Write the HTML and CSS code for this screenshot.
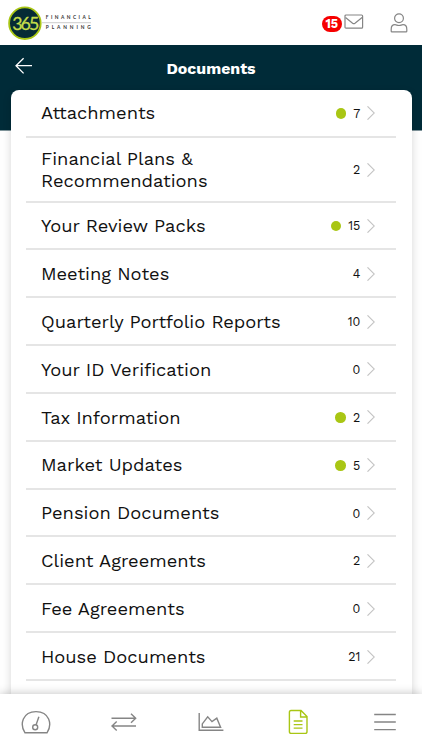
FILE: index.html
```html
<!DOCTYPE html>
<html lang="en">
<head>
 <meta charset="UTF-8">
 <meta name="viewport" content="width=device-width, initial-scale=1">
 <title>Documents</title>
 <link rel="stylesheet" href="styles.css">
</head>
<body>
<div class="app">
 <header class="topbar">
  <svg class="logo" width="86" height="36" viewBox="0 0 86 36">
   <circle cx="16.9" cy="18.2" r="15.8" fill="#062b35" stroke="#a9c614" stroke-width="1.8"/>
   <text class="logo-num" x="4.2" y="24.6">365</text>
   <path d="M34 17.7H83" stroke="#aaa" stroke-width="0.6"/>
   <text class="logo-word" x="37.8" y="14.2" textLength="45" lengthAdjust="spacing">FINANCIAL</text>
   <text class="logo-word" x="37.8" y="24" textLength="45" lengthAdjust="spacing">PLANNING</text>
  </svg>
  <div class="top-icons">
   <span class="badge">15</span>
   <svg class="mail" width="20" height="16" viewBox="0 0 20 16">
    <rect x="1" y="1" width="17.6" height="13.2" rx="1"/>
    <path d="M1.5 3.5L8.6 9.2Q9.8 10 11 9.2L18.1 3.5"/>
   </svg>
   <svg width="18" height="20" viewBox="0 0 18 20">
    <circle cx="9" cy="5.3" r="4.4"/>
    <path d="M1.2 18.2V16.2C1.2 13.5 2.8 11.7 5 11.7C6.5 11.7 7.2 12.5 9 12.5S11.5 11.7 13 11.7C15.2 11.7 16.8 13.5 16.8 16.2V18.2Q16.8 18.9 16 18.9H2Q1.2 18.9 1.2 18.2Z"/>
   </svg>
  </div>
 </header>
 <div class="titlebar">
  <svg class="back" width="18" height="18" viewBox="0 0 18 18"><path d="M17 8.7H1M8.6 1.2L1 8.7L8.6 16.4"/></svg>
  <h1>Documents</h1>
 </div>
 <main class="card">
  <ul class="list">
   <li><span class="name">Attachments</span><i class="dot"></i><span class="count">7</span><svg class="chev" viewBox="0 0 8 14"><path d="M0.5 0.3L7.3 7L0.5 13.7"/></svg></li>
   <li class="tall"><span class="name">Financial Plans &amp;<br>Recommendations</span><span class="count">2</span><svg class="chev" viewBox="0 0 8 14"><path d="M0.5 0.3L7.3 7L0.5 13.7"/></svg></li>
   <li><span class="name">Your Review Packs</span><i class="dot"></i><span class="count">15</span><svg class="chev" viewBox="0 0 8 14"><path d="M0.5 0.3L7.3 7L0.5 13.7"/></svg></li>
   <li><span class="name">Meeting Notes</span><span class="count">4</span><svg class="chev" viewBox="0 0 8 14"><path d="M0.5 0.3L7.3 7L0.5 13.7"/></svg></li>
   <li><span class="name">Quarterly Portfolio Reports</span><span class="count">10</span><svg class="chev" viewBox="0 0 8 14"><path d="M0.5 0.3L7.3 7L0.5 13.7"/></svg></li>
   <li><span class="name">Your ID Verification</span><span class="count">0</span><svg class="chev" viewBox="0 0 8 14"><path d="M0.5 0.3L7.3 7L0.5 13.7"/></svg></li>
   <li><span class="name">Tax Information</span><i class="dot"></i><span class="count">2</span><svg class="chev" viewBox="0 0 8 14"><path d="M0.5 0.3L7.3 7L0.5 13.7"/></svg></li>
   <li><span class="name">Market Updates</span><i class="dot"></i><span class="count">5</span><svg class="chev" viewBox="0 0 8 14"><path d="M0.5 0.3L7.3 7L0.5 13.7"/></svg></li>
   <li><span class="name">Pension Documents</span><span class="count">0</span><svg class="chev" viewBox="0 0 8 14"><path d="M0.5 0.3L7.3 7L0.5 13.7"/></svg></li>
   <li><span class="name">Client Agreements</span><span class="count">2</span><svg class="chev" viewBox="0 0 8 14"><path d="M0.5 0.3L7.3 7L0.5 13.7"/></svg></li>
   <li><span class="name">Fee Agreements</span><span class="count">0</span><svg class="chev" viewBox="0 0 8 14"><path d="M0.5 0.3L7.3 7L0.5 13.7"/></svg></li>
   <li><span class="name">House Documents</span><span class="count">21</span><svg class="chev" viewBox="0 0 8 14"><path d="M0.5 0.3L7.3 7L0.5 13.7"/></svg></li>
  </ul>
 </main>
 <nav class="tabbar">
  <!-- dashboard -->
  <svg width="30" height="26" viewBox="0 0 30 26">
   <path d="M4 23.8C-1.5 15.5 1.5 2.6 15 2.6S31.5 15.5 26 23.8Z"/>
   <circle cx="14.2" cy="18.2" r="2.5"/><path d="M15.1 15.8L17.9 7.8"/>
  </svg>
  <!-- transfers -->
  <svg width="30" height="26" viewBox="0 0 30 26">
   <path d="M2.5 9.3H26.5M22 4.7L26.7 9.3L22 13.8M27 17H3M7.7 12.4L3 17L7.7 21.6"/>
  </svg>
  <!-- valuation -->
  <svg width="30" height="26" viewBox="0 0 30 26">
   <path d="M3.2 4.1V21.3H27.4"/>
   <path d="M6.3 18.3V14.9L11.7 7.8L16 12.6L20.8 9.2L24.6 18.3Z"/>
  </svg>
  <!-- documents -->
  <svg class="active" width="30" height="26" viewBox="0 0 30 26">
   <path d="M8 1.5H18L24 7.6V22.5Q24 24.4 22.2 24.4H8.2Q6.4 24.4 6.4 22.5V3.2Q6.4 1.5 8 1.5ZM17.6 1.7V8H23.8M10.7 12H19.5M10.7 15.6H19.5M10.7 19.1H19.5"/>
  </svg>
  <!-- menu -->
  <svg width="30" height="26" viewBox="0 0 30 26"><path d="M4.2 5.5H25.8M4.2 13H25.8M4.2 20.6H25.8"/></svg>
 </nav>
</div>
</body>
</html>
```
FILE: styles.css
```css
* {
 box-sizing: border-box;
}
body {
 margin: 0;
 font-family: "Work Sans", Inter, "Noto Sans", sans-serif;
 color: #111;
 background: #fff;
}
svg {
 display: block;
 flex: none;
 fill: none;
 stroke: #858585;
 stroke-width: 1.2;
}
.app {
 display: flex;
 flex-direction: column;
 height: 750px;
 overflow: hidden;
 background: linear-gradient(#002b38, #002b38) 0 45px / 100% 85.5px no-repeat, #fefefe;
}
.topbar {
 display: flex;
 justify-content: space-between;
 flex: none;
 height: 45px;
 padding: 4.5px 14px 0 8px;
 background: #fff;
}
.logo text {
 stroke: none;
}
.logo-num {
 font-family: Lato, sans-serif;
 font-size: 17.8px;
 letter-spacing: -1.9px;
 fill: #c4dc4a;
}
.logo .logo-num {
 stroke: #c4dc4a;
 stroke-width: 0.3;
}
.logo-word {
 font-family: Lato, sans-serif;
 font-size: 4.8px;
 font-weight: bold;
 fill: #333;
}
.top-icons {
 display: flex;
 align-items: flex-start;
 padding-top: 8.5px;
}
.top-icons .mail {
 margin: 1px 26px 0 2px;
}
.badge {
 width: 20.5px;
 height: 16.5px;
 margin-top: 2.5px;
 border-radius: 9px;
 background: #f60000;
 color: #fff;
 font-size: 12.5px;
 font-weight: 700;
 line-height: 16.5px;
 text-align: center;
}
.titlebar {
 display: grid;
 grid-template-columns: 40px 1fr 40px;
 flex: none;
 height: 44.7px;
 padding-top: 12px;
}
.back {
 margin-left: 15px;
 stroke: #fff;
 stroke-width: 1.3;
}
.titlebar h1 {
 margin: 0;
 color: #fff;
 font-size: 15.9px;
 font-weight: 700;
 line-height: 23px;
 text-align: center;
}
.card {
 flex: 1;
 min-height: 0;
 margin: 0 10.5px;
 padding: 0 15.5px;
 border-radius: 8px 8px 0 0;
 background: #fff;
 box-shadow: 0 3px 9px rgba(0, 0, 0, 0.16);
}
.list {
 margin: 0;
 padding: 0;
 list-style: none;
}
.list li {
 display: flex;
 align-items: center;
 height: 47.85px;
 padding: 0 21.2px 0 15px;
 border-bottom: 2px solid #e5e5e5;
}
.list .tall {
 height: 65px;
}
.name {
 flex: 1;
 padding-top: 1px;
 font-size: 18.33px;
 line-height: 21.5px;
}
.dot {
 width: 10.6px;
 height: 10.6px;
 margin: 1.4px 7px 0 0;
 border-radius: 50%;
 background: #a9c614;
}
.count {
 padding-top: 1px;
 font-size: 12.5px;
}
.chev {
 width: 8px;
 height: 14px;
 margin: 1px 0 0 6.5px;
 stroke: #c4c4c4;
 stroke-width: 1.1;
}
.tabbar {
 position: relative;
 display: flex;
 justify-content: space-between;
 flex: none;
 height: 56.5px;
 padding: 15px 21.5px 0 21.3px;
 background: #fff;
 box-shadow: 0 0 9px rgba(0, 0, 0, 0.25);
}
.tabbar svg {
 stroke-width: 1.4;
}
.tabbar .active {
 stroke: #a9c614;
}
```
